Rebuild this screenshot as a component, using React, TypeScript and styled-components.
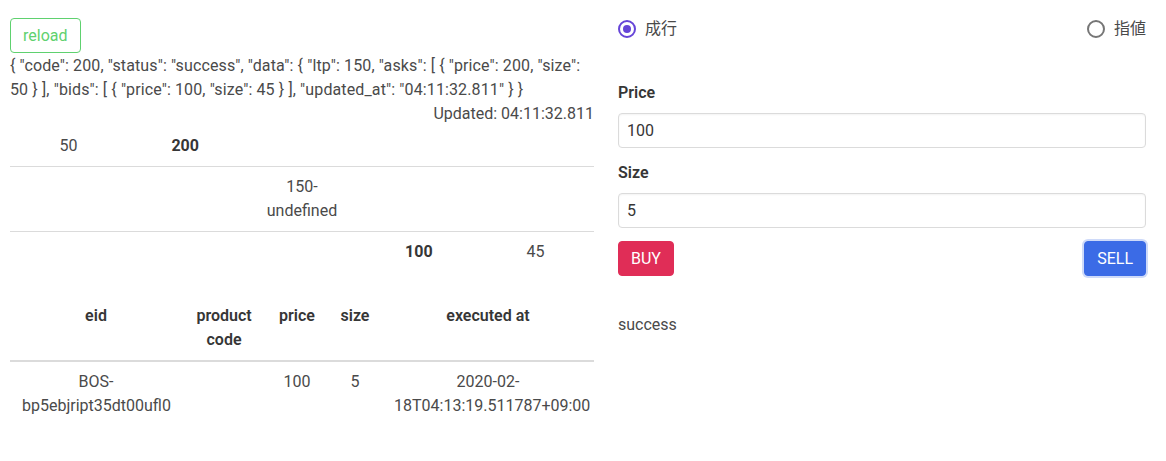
import styled, { createGlobalStyle } from 'styled-components';

const GlobalStyle = createGlobalStyle`
  html, body {
    margin: 0;
    padding: 0;
    background: #ffffff;
  }
  body {
    font-family: Roboto, "Noto Sans CJK JP", sans-serif;
    font-size: 16px;
    line-height: 24px;
    color: #4a4a4a;
  }
  * {
    box-sizing: border-box;
  }
`;

const PAGE = styled.div`
  display: grid;
  grid-template-columns: 584px 1fr;
  column-gap: 24px;
  padding: 18px 20px 0 10px;
`;

const LEFT = styled.div`
  display: flex;
  flex-direction: column;
  align-items: stretch;
`;

const RIGHT = styled.div`
  display: flex;
  flex-direction: column;
  padding-top: 1px;
`;

const BUTTON = styled.button<{ $tone: 'outline' | 'danger' | 'link' }>`
  height: 35px;
  padding: 0 12px;
  border-radius: 4px;
  font-family: inherit;
  font-size: 16px;
  line-height: 1;
  cursor: pointer;
  border: 1px solid
    ${(p) => (p.$tone === 'outline' ? '#5fd16f' : p.$tone === 'danger' ? '#e02d57' : '#3b6be6')};
  background: ${(p) => (p.$tone === 'outline' ? '#ffffff' : p.$tone === 'danger' ? '#e02d57' : '#3b6be6')};
  color: ${(p) => (p.$tone === 'outline' ? '#5fd16f' : '#ffffff')};
  box-shadow: ${(p) => (p.$tone === 'link' ? '0 0 0 2px rgba(59, 107, 230, 0.25)' : 'none')};
`;

const RELOAD_ROW = styled.div`
  display: flex;
`;

const JSON_TEXT = styled.div`
  margin-top: 1px;
  letter-spacing: 0.12px;
`;

const UPDATED = styled.div`
  text-align: right;
`;

const BOOK = styled.table`
  width: 100%;
  table-layout: fixed;
  border-collapse: collapse;
  margin-bottom: 24px;

  td {
    padding: 8px 12px;
    text-align: center;
    vertical-align: top;
    border-bottom: 1px solid #dbdbdb;
  }
  tr:last-child td {
    border-bottom: 0;
  }
`;

const STRONG = styled.strong`
  font-weight: 700;
  color: #363636;
`;

const TRADES = styled.table`
  width: 100%;
  table-layout: fixed;
  border-collapse: collapse;

  th {
    padding: 8px 12px;
    text-align: center;
    vertical-align: top;
    font-weight: 600;
    color: #363636;
    border-bottom: 2px solid #dbdbdb;
  }
  td {
    padding: 8px 12px;
    text-align: center;
    vertical-align: top;
  }
`;

const RADIO_ROW = styled.div`
  display: flex;
  justify-content: space-between;
  align-items: center;
  height: 20px;
`;

const RADIO = styled.label`
  display: flex;
  align-items: center;
  gap: 9px;
  font-size: 16px;
  color: #4a4a4a;
`;

const DOT = styled.span<{ $on: boolean }>`
  width: 18px;
  height: 18px;
  border-radius: 50%;
  border: 2px solid ${(p) => (p.$on ? '#6645d8' : '#767676')};
  display: flex;
  align-items: center;
  justify-content: center;

  &::after {
    content: '';
    width: 8px;
    height: 8px;
    border-radius: 50%;
    background: ${(p) => (p.$on ? '#6645d8' : 'transparent')};
  }
`;

const FIELD = styled.div<{ $top: number }>`
  display: flex;
  flex-direction: column;
  gap: 8px;
  margin-top: ${(p) => p.$top}px;
`;

const LABEL = styled.label`
  font-weight: 600;
  color: #363636;
`;

const INPUT = styled.input`
  height: 35px;
  width: 100%;
  padding: 0 8px;
  border: 1px solid #dbdbdb;
  border-radius: 4px;
  font-family: inherit;
  font-size: 16px;
  color: #363636;
  box-shadow: inset 0 1px 2px rgba(10, 10, 10, 0.05);
  outline: none;
`;

const ACTIONS = styled.div`
  display: flex;
  justify-content: space-between;
  margin-top: 13px;
`;

const MESSAGE = styled.div`
  margin-top: 37px;
`;

const book = [
  ['50', '*200', '', '', ''],
  ['', '', '150-undefined', '', ''],
  ['', '', '', '*100', '45'],
];

const trades = [
  {
    eid: 'BOS-bp5ebjript35dt00ufl0',
    code: '',
    price: '100',
    size: '5',
    at: '2020-02-18T04:13:19.511787+09:00',
  },
];

const colWidths = [172, 84, 62, 54, 212];

export default function App(): JSX.Element {
  return (
    <>
      <GlobalStyle />
      <PAGE>
        <LEFT>
          <RELOAD_ROW>
            <BUTTON $tone="outline">reload</BUTTON>
          </RELOAD_ROW>
          <JSON_TEXT>
            {'{ "code": 200, "status": "success", "data": { "ltp": 150, "asks": [ { "price": 200, "size": 50 } ], "bids": [ { "price": 100, "size": 45 } ], "updated_at": "04:11:32.811" } }'}
          </JSON_TEXT>
          <UPDATED>Updated: 04:11:32.811</UPDATED>
          <BOOK>
            <tbody>
              {book.map((row, i) => (
                <tr key={i}>
                  {row.map((cell, j) => (
                    <td key={j}>
                      {cell.startsWith('*') ? <STRONG>{cell.slice(1)}</STRONG> : cell}
                    </td>
                  ))}
                </tr>
              ))}
            </tbody>
          </BOOK>
          <TRADES>
            <colgroup>
              {colWidths.map((w, i) => (
                <col key={i} style={{ width: w }} />
              ))}
            </colgroup>
            <thead>
              <tr>
                <th>eid</th>
                <th>product code</th>
                <th>price</th>
                <th>size</th>
                <th>executed at</th>
              </tr>
            </thead>
            <tbody>
              {trades.map((t) => (
                <tr key={t.eid}>
                  <td>{t.eid}</td>
                  <td>{t.code}</td>
                  <td>{t.price}</td>
                  <td>{t.size}</td>
                  <td>{t.at}</td>
                </tr>
              ))}
            </tbody>
          </TRADES>
        </LEFT>
        <RIGHT>
          <RADIO_ROW>
            <RADIO>
              <DOT $on={true} />
              成行
            </RADIO>
            <RADIO>
              <DOT $on={false} />
              指値
            </RADIO>
          </RADIO_ROW>
          <FIELD $top={42}>
            <LABEL>Price</LABEL>
            <INPUT defaultValue="100" />
          </FIELD>
          <FIELD $top={13}>
            <LABEL>Size</LABEL>
            <INPUT defaultValue="5" />
          </FIELD>
          <ACTIONS>
            <BUTTON $tone="danger">BUY</BUTTON>
            <BUTTON $tone="link">SELL</BUTTON>
          </ACTIONS>
          <MESSAGE>success</MESSAGE>
        </RIGHT>
      </PAGE>
    </>
  );
}
